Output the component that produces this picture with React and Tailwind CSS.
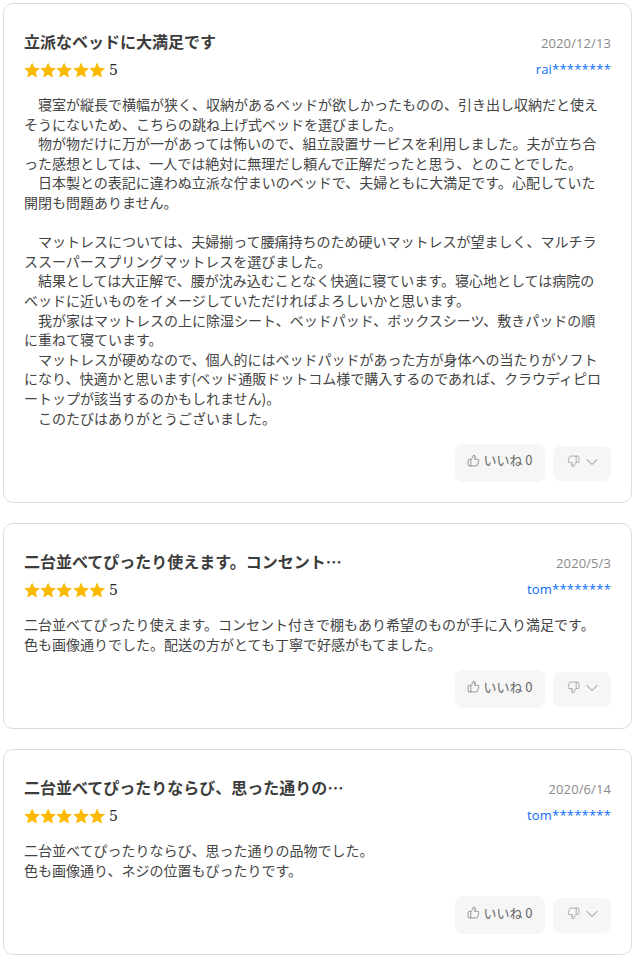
import React from 'react';
import { ThumbsUp, ThumbsDown, ChevronDown } from 'lucide-react';

const reviews = [
  {
    title: '立派なベッドに大満足です',
    date: '2020/12/13',
    user: 'rai********',
    lines: [
      '　寝室が縦長で横幅が狭く、収納があるベッドが欲しかったものの、引き出し収納だと使えそうにないため、こちらの跳ね上げ式ベッドを選びました。',
      '　物が物だけに万が一があっては怖いので、組立設置サービスを利用しました。夫が立ち合った感想としては、一人では絶対に無理だし頼んで正解だったと思う、とのことでした。',
      '　日本製との表記に違わぬ立派な佇まいのベッドで、夫婦ともに大満足です。心配していた開閉も問題ありません。',
      '\u00a0',
      '　マットレスについては、夫婦揃って腰痛持ちのため硬いマットレスが望ましく、マルチラススーパースプリングマットレスを選びました。',
      '　結果としては大正解で、腰が沈み込むことなく快適に寝ています。寝心地としては病院のベッドに近いものをイメージしていただければよろしいかと思います。',
      '　我が家はマットレスの上に除湿シート、ベッドパッド、ボックスシーツ、敷きパッドの順に重ねて寝ています。',
      '　マットレスが硬めなので、個人的にはベッドパッドがあった方が身体への当たりがソフトになり、快適かと思います(ベッド通販ドットコム様で購入するのであれば、クラウディピロートップが該当するのかもしれません)。',
      '　このたびはありがとうございました。',
    ],
  },
  {
    title: '二台並べてぴったり使えます。コンセント付きで棚もあり希望のものが',
    date: '2020/5/3',
    user: 'tom********',
    lines: [
      '二台並べてぴったり使えます。コンセント付きで棚もあり希望のものが手に入り満足です。',
      '色も画像通りでした。配送の方がとても丁寧で好感がもてました。',
    ],
  },
  {
    title: '二台並べてぴったりならび、思った通りの品物でした。色も画像通り',
    date: '2020/6/14',
    user: 'tom********',
    lines: ['二台並べてぴったりならび、思った通りの品物でした。', '色も画像通り、ネジの位置もぴったりです。'],
  },
];

function Star() {
  return (
    <svg viewBox="0 0 24 24" className="w-[16.2px] h-[16.2px] fill-[#fdb900] block">
      <path d="M12 .8l3.4 7.6 8.3.9-6.2 5.5 1.8 8.2L12 18.8 4.7 23l1.8-8.2L.3 9.3l8.3-.9z" />
    </svg>
  );
}

function ReviewCard({ review }) {
  return (
    <div className="border border-[#dcdcdc] rounded-[10px] bg-white pt-[23px] pb-[20px] px-[20px]">
      <div className="flex justify-between items-start">
        <div>
          <h3 className="w-[322px] truncate text-[16px] leading-[28px] font-bold text-[#3c3c3c]">{review.title}</h3>
          <div className="flex items-center mt-[4px] h-[22px]">
            <div className="flex">
              <Star /><Star /><Star /><Star /><Star />
            </div>
            <span className="ml-[4px] text-[14px] text-[#222] font-['DejaVu_Serif',serif]">5</span>
          </div>
        </div>
        <div className="text-right">
          <div className="text-[13px] leading-[20px] mt-[6px] text-[#8a8a8a] tracking-[0.1px] font-['Open_Sans',sans-serif]">{review.date}</div>
          <div className="text-[13px] leading-[20px] mt-[6px] text-[#0a6cf5] tracking-[0.2px] font-['Open_Sans',sans-serif]">{review.user}</div>
        </div>
      </div>
      <div className="mt-[14px] pr-[5px] text-[14px] leading-[19.6px] text-[#444]">
        {review.lines.map((line, i) => (
          <p key={i}>{line}</p>
        ))}
      </div>
      <div className="flex justify-end items-center gap-[8px] mt-[16px]">
        <button className="h-[38px] w-[90px] rounded-[8px] bg-[#f6f6f6] flex items-center justify-center gap-[3px] pb-[6px] text-[13px] text-[#666]">
          <ThumbsUp size={13} strokeWidth={1.2} />
          <span>いいね 0</span>
        </button>
        <button className="h-[35px] w-[58px] rounded-[8px] bg-[#f6f6f6] flex items-center pl-[14px] pb-[3px] gap-[2px] text-[#888]">
          <ThumbsDown size={13} strokeWidth={1.2} />
          <ChevronDown size={20} strokeWidth={1.2} />
        </button>
      </div>
    </div>
  );
}

export default function App() {
  return (
    <div className="w-[634px] pt-[3px] pl-[3px] pr-[2px] bg-white flex flex-col gap-[20px] font-['Noto_Sans_CJK_JP','Noto_Sans',sans-serif]">
      {reviews.map((r) => (
        <ReviewCard key={r.date} review={r} />
      ))}
    </div>
  );
}
